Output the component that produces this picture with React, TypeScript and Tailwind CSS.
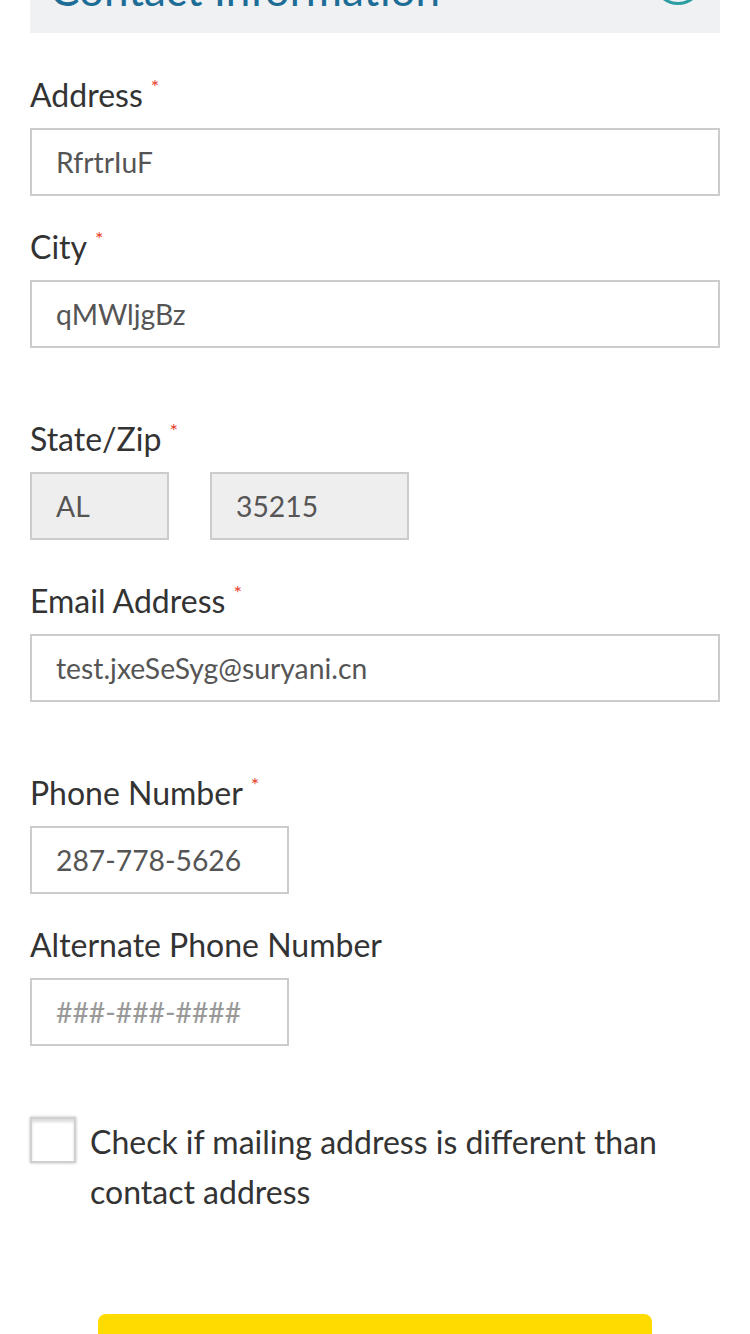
import React from 'react'

type FieldProps = {
  label: string
  required?: boolean
  className?: string
  children: React.ReactNode
}

function Field({ label, required, className, children }: FieldProps) {
  return (
    <div className={`flex flex-col gap-[14px] ${className ?? ''}`}>
      <label className="text-[32px] leading-[38px] text-[#333]">
        {label}
        {required && (
          <span className="ml-2 align-top text-[20px] leading-none text-[#e8412c]">*</span>
        )}
      </label>
      {children}
    </div>
  )
}

const inputBase =
  'h-[68px] border-2 border-[#cccccc] px-6 text-[28.3px] text-[#555] outline-none placeholder:text-[#999]'

export default function App() {
  return (
    <div className="flex min-h-screen flex-col bg-white px-[30px] font-[Lato,sans-serif]">
      <div className="-mt-[67px] flex h-[100px] items-end justify-between bg-[#f0f1f3] pb-[22px] pl-5 pr-[17px]">
        <h2 className="text-[44px] leading-none text-[#1d6d96]">Contact Information</h2>
        <div className="mb-[6px] h-[50px] w-[50px] rounded-full border-[3px] border-[#2a9ea0]" />
      </div>

      <Field label="Address" required className="mt-[43px]">
        <input className={`${inputBase} w-full bg-white`} defaultValue="RfrtrIuF" />
      </Field>

      <Field label="City" required className="mt-8">
        <input className={`${inputBase} w-full bg-white`} defaultValue="qMWljgBz" />
      </Field>

      <Field label="State/Zip" required className="mt-[72px]">
        <div className="flex gap-[41px]">
          <input className={`${inputBase} w-[139px] bg-[#eeeeee]`} defaultValue="AL" readOnly />
          <input className={`${inputBase} w-[199px] bg-[#eeeeee]`} defaultValue="35215" readOnly />
        </div>
      </Field>

      <Field label="Email Address" required className="mt-[42px]">
        <input className={`${inputBase} w-full bg-white`} defaultValue="test.jxeSeSyg@suryani.cn" />
      </Field>

      <Field label="Phone Number" required className="mt-[72px]">
        <input className={`${inputBase} w-[259px] bg-white`} defaultValue="287-778-5626" />
      </Field>

      <Field label="Alternate Phone Number" className="mt-8">
        <input className={`${inputBase} w-[259px] bg-white`} placeholder="###-###-####" />
      </Field>

      <label className="mt-[71px] flex items-start gap-[14px]">
        <span className="h-[46px] w-[46px] shrink-0 border-2 border-[#d0d0d0] bg-white shadow-[inset_0_3px_3px_rgba(0,0,0,0.14),0_0_3px_rgba(0,0,0,0.25)]" />
        <span className="text-[32px] leading-[50px] text-[#333]">
          Check if mailing address is different than contact address
        </span>
      </label>

      <button className="mx-auto mt-[97px] h-[90px] w-[554px] rounded-lg bg-[#ffdb00]" />
    </div>
  )
}
